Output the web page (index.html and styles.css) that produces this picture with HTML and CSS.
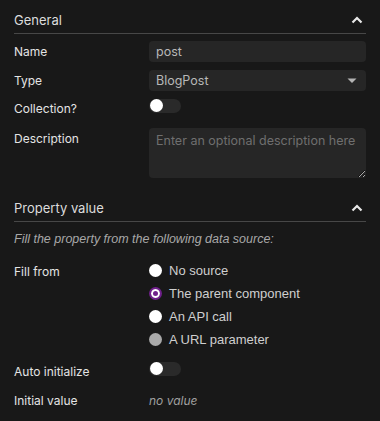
FILE: index.html
```html
<!DOCTYPE html>
<html lang="en">
<head>
  <meta charset="UTF-8">
  <title>Property settings</title>
  <link rel="stylesheet" href="styles.css">
</head>
<body>
<div class="panel">

  <!-- General -->
  <div class="section-head">
    <span>General</span>
    <svg class="chevron" width="12" height="8" viewBox="0 0 12 8"><path d="M1.5 6.5 L6 2 L10.5 6.5" fill="none" stroke="#e8e8e8" stroke-width="2.2"/></svg>
  </div>

  <div class="row row-name">
    <div class="label">Name</div>
    <div class="field input">post</div>
  </div>

  <div class="row row-type">
    <div class="label">Type</div>
    <div class="field select">
      <span>BlogPost</span>
      <svg width="10" height="6" viewBox="0 0 10 6"><path d="M0.5 0.5 L9.5 0.5 L5 5 Z" fill="#b4b4b4"/></svg>
    </div>
  </div>

  <div class="row row-collection">
    <div class="label">Collection?</div>
    <div class="toggle"><span class="knob"></span></div>
  </div>

  <div class="row row-desc">
    <div class="label">Description</div>
    <textarea class="field textarea" placeholder="Enter an optional description here"></textarea>
  </div>

  <!-- Property value -->
  <div class="section-head second">
    <span>Property value</span>
    <svg class="chevron" width="12" height="8" viewBox="0 0 12 8"><path d="M1.5 6.5 L6 2 L10.5 6.5" fill="none" stroke="#e8e8e8" stroke-width="2.2"/></svg>
  </div>

  <p class="note">Fill the property from the following data source:</p>

  <div class="row row-fill">
    <div class="label">Fill from</div>
    <div class="radios">
      <div class="radio"><span class="dot"></span>No source</div>
      <div class="radio"><span class="dot checked"></span>The parent component</div>
      <div class="radio"><span class="dot"></span>An API call</div>
      <div class="radio"><span class="dot disabled"></span>A URL parameter</div>
    </div>
  </div>

  <div class="row row-auto">
    <div class="label">Auto initialize</div>
    <div class="toggle"><span class="knob"></span></div>
  </div>

  <div class="row row-initial">
    <div class="label">Initial value</div>
    <div class="empty">no value</div>
  </div>

</div>
</body>
</html>
```

FILE: styles.css
```css
body {
  margin: 0;
  background: #181818;
  color: #e4e4e4;
  font-family: Inter, "Noto Sans", sans-serif;
  font-size: 12px;
}

.panel {
  padding: 0 14px;
}

/* セクション見出し */
.section-head {
  display: flex;
  justify-content: space-between;
  align-items: center;
  padding: 11px 0 4px;
  line-height: 18px;
  font-size: 13px;
  color: #dcdcdc;
  border-bottom: 1px solid #474747;
}
.section-head.second {
  margin-top: 10px;
}
.chevron {
  margin-right: 3px;
}

/* 行 */
.row {
  display: flex;
  align-items: flex-start;
}
.label {
  width: 135px;
  flex-shrink: 0;
  line-height: 21px;
}
.row-name { margin-top: 7px; }
.row-type { margin-top: 8px; }
.row-collection { margin-top: 7px; }
.row-desc { margin-top: 9px; }
.row-fill { margin-top: 11px; }
.row-fill .label { padding-top: 2px; }
.row-auto { margin-top: 10px; }
.row-initial { margin-top: 8px; }

.field {
  flex: 1;
  box-sizing: border-box;
  background: #262626;
  border-radius: 4px;
  color: #b8b8b8;
  font-family: Inter, "Noto Sans", sans-serif;
  font-size: 12.5px;
}
.input {
  height: 21px;
  line-height: 21px;
  padding: 0 7px;
}
.select {
  height: 21px;
  line-height: 21px;
  padding: 0 9px 0 7px;
  display: flex;
  justify-content: space-between;
  align-items: center;
}
.textarea {
  height: 50px;
  border: none;
  outline: none;
  padding: 3px 7px;
  line-height: 19px;
  resize: vertical;
  color-scheme: dark;
}
.textarea::placeholder {
  color: #6f6f6f;
}

/* トグル */
.toggle {
  width: 32px;
  height: 14px;
  margin-top: 1px;
  border-radius: 7px;
  background: #2a2a2a;
  position: relative;
}
.knob {
  position: absolute;
  left: 1px;
  top: 0;
  width: 13px;
  height: 13px;
  border-radius: 50%;
  background: #fff;
}

/* 説明文 */
.note {
  margin: 8px 0 0;
  line-height: 18px;
  font-family: "Liberation Sans", Arial, sans-serif;
  font-style: italic;
  font-size: 12.5px;
  color: #a8a8a8;
}

/* ラジオ */
.radios {
  display: flex;
  flex-direction: column;
}
.radio {
  display: flex;
  align-items: center;
  height: 23px;
  font-family: "Liberation Sans", Arial, sans-serif;
  font-size: 13px;
  color: #cfcfcf;
}
.dot {
  width: 13px;
  height: 13px;
  border-radius: 50%;
  background: #fff;
  margin: 0 7px 0 0;
  box-sizing: border-box;
}
.dot.checked {
  border: 2px solid #6f1f8a;
  background: #fff;
  box-shadow: inset 0 0 0 2px #fff, inset 0 0 0 6px #6f1f8a;
}
.dot.disabled {
  background: #a9a9a9;
}

.empty {
  line-height: 21px;
  font-style: italic;
  color: #a0a0a0;
}
```
